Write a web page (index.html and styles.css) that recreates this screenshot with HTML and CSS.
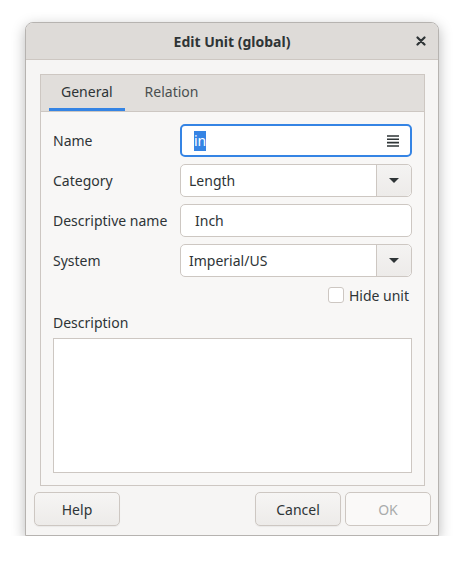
FILE: index.html
```html
<!DOCTYPE html>
<html lang="en">
<head>
    <meta charset="UTF-8">
    <title>Edit Unit (global)</title>
    <link rel="stylesheet" href="styles.css">
</head>
<body>
    <div class="window">
        <header class="titlebar">
            <div class="title">Edit Unit (global)</div>
            <button class="close" aria-label="Close">
                <svg width="10" height="10" viewBox="0 0 10 10">
                    <path d="M1.5 1.5 L8.5 8.5 M8.5 1.5 L1.5 8.5" stroke="#2e3436" stroke-width="2.2" stroke-linecap="round"/>
                </svg>
            </button>
        </header>

        <div class="content">
            <div class="notebook">
                <div class="tabs">
                    <div class="tab active">General</div>
                    <div class="tab">Relation</div>
                </div>

                <div class="page">
                    <div class="form-grid">
                        <label>Name</label>
                        <div class="entry focused">
                            <span class="selected">in</span>
                            <svg class="entry-icon" width="14" height="14" viewBox="0 0 14 14">
                                <path d="M1 2h12M1 5.3h12M1 8.6h12M1 12h12" stroke="#2e3436" stroke-width="1.6"/>
                            </svg>
                        </div>

                        <label>Category</label>
                        <div class="combo">
                            <span class="combo-text">Length</span>
                            <span class="combo-button"><span class="arrow"></span></span>
                        </div>

                        <label>Descriptive name</label>
                        <div class="entry"><span class="entry-text">Inch</span></div>

                        <label>System</label>
                        <div class="combo">
                            <span class="combo-text">Imperial/US</span>
                            <span class="combo-button"><span class="arrow"></span></span>
                        </div>
                    </div>

                    <div class="check-row">
                        <span class="checkbox"></span>
                        <span>Hide unit</span>
                    </div>

                    <div class="desc-label">Description</div>
                    <div class="textarea"></div>
                </div>
            </div>

            <div class="buttons">
                <button class="btn">Help</button>
                <div class="spacer"></div>
                <button class="btn">Cancel</button>
                <button class="btn disabled">OK</button>
            </div>
        </div>
    </div>
</body>
</html>
```

FILE: styles.css
```css
body {
    margin: 0;
    padding: 0;
    background-color: #ffffff;
    font-family: "Noto Sans", "Open Sans", sans-serif;
    font-size: 14px;
    color: #2e3436;
}

.window {
    margin: 22px 0 0 25px;
    width: 414px;
    height: 514px;
    box-sizing: border-box;
    border: 1px solid #b6b3b0;
    border-radius: 8px 8px 0 0;
    background-color: #f6f5f4;
    box-shadow: 0 4px 14px rgba(0, 0, 0, 0.28);
    display: flex;
    flex-direction: column;
    overflow: hidden;
}

.titlebar {
    height: 36px;
    flex-shrink: 0;
    background-color: #dedbd8;
    border-bottom: 1px solid #cdc7c2;
    display: flex;
    align-items: center;
    justify-content: center;
    position: relative;
}

.title {
    font-weight: bold;
    font-size: 14px;
    color: #2e3436;
}

.close {
    position: absolute;
    right: 12px;
    top: 13px;
    border: none;
    background: none;
    padding: 0;
    width: 10px;
    height: 10px;
    display: flex;
}

.content {
    flex: 1;
    display: flex;
    flex-direction: column;
    padding: 14px 7px 7px 8px;
}

.notebook {
    margin: 0 6px 0 6px;
    border: 1px solid #cdc7c2;
    display: flex;
    flex-direction: column;
    height: 412px;
    box-sizing: border-box;
}

.tabs {
    height: 36px;
    background-color: #e1dedb;
    border-bottom: 1px solid #cdc7c2;
    display: flex;
    gap: 8px;
    padding-left: 8px;
}

.tab {
    padding: 0 12px;
    display: flex;
    align-items: center;
    color: #4a4f50;
    box-sizing: border-box;
    justify-content: center;
    border-bottom: 3px solid transparent;
}

.tab.active {
    color: #2e3436;
    border-bottom-color: #3584e4;
}

.page {
    flex: 1;
    background-color: #f8f7f6;
    padding: 12px 12px 12px 12px;
    display: flex;
    flex-direction: column;
}

.form-grid {
    display: grid;
    grid-template-columns: 127px 1fr;
    row-gap: 7px;
    align-items: center;
}

.form-grid label {
    color: #2e3436;
}

.entry,
.combo {
    height: 33px;
    box-sizing: border-box;
    border: 1px solid #cdc7c2;
    border-radius: 5px;
    background-color: #ffffff;
    display: flex;
    align-items: center;
}

.entry {
    padding: 0 10px 0 14px;
}

.entry.focused {
    border: 2px solid #3584e4;
    padding-left: 12px;
}

.selected {
    background-color: #3584e4;
    color: #ffffff;
    line-height: 20px;
}

.entry-icon {
    margin-left: auto;
}

.combo-text {
    flex: 1;
    padding-left: 8px;
}

.combo-button {
    width: 34px;
    height: 100%;
    border-left: 1px solid #cdc7c2;
    border-radius: 0 5px 5px 0;
    background: linear-gradient(#f4f3f2, #edebe9);
    display: flex;
    align-items: center;
    justify-content: center;
}

.arrow {
    width: 0;
    height: 0;
    border-left: 5px solid transparent;
    border-right: 5px solid transparent;
    border-top: 5px solid #2e3436;
}

.check-row {
    display: flex;
    align-items: center;
    justify-content: flex-end;
    margin-top: 10px;
    padding-right: 3px;
    height: 16px;
}

.checkbox {
    width: 14px;
    height: 14px;
    border: 1px solid #cdc7c2;
    border-radius: 3px;
    background-color: #ffffff;
    margin-right: 5px;
}

.desc-label {
    margin-top: 10px;
    line-height: 20px;
}

.textarea {
    margin-top: 5px;
    flex: 1;
    border: 1px solid #cdc7c2;
    background-color: #ffffff;
}

.buttons {
    display: flex;
    margin-top: 6px;
    gap: 4px;
}

.spacer {
    flex: 1;
}

.btn {
    width: 86px;
    height: 34px;
    font-family: inherit;
    font-size: 14px;
    color: #2e3436;
    border: 1px solid #cdc7c2;
    border-radius: 5px;
    background: linear-gradient(#f6f5f4, #edebe9);
    box-shadow: 0 1px 1px rgba(0, 0, 0, 0.05);
}

.btn.disabled {
    color: #a9abab;
    background: #faf9f8;
    box-shadow: none;
}
```
